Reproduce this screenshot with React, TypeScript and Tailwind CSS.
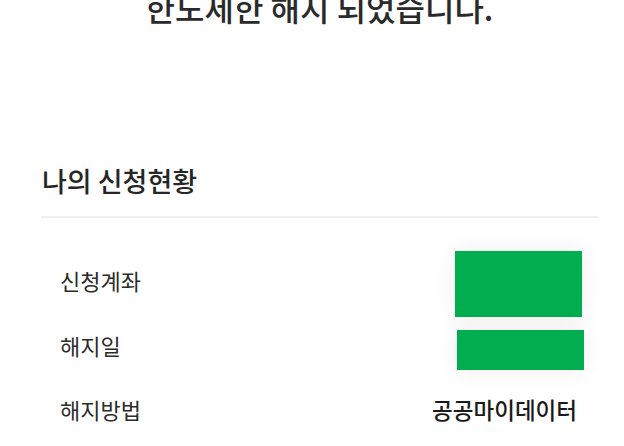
export default function App() {
  const rows = [
    { label: "신청계좌", value: null, box: "right-[16px] top-[3px] w-[127px] h-[66px]" },
    { label: "해지일", value: null, box: "right-[14px] top-[17px] w-[127px] h-[40px]" },
    { label: "해지방법", value: "공공마이데이터", box: "" },
  ];

  return (
    <div
      className="w-[624px] h-[446px] overflow-hidden bg-white pl-[41px] pr-[26px] text-[#222]"
      style={{ fontFamily: '"Noto Sans CJK KR", "Noto Sans", sans-serif' }}
    >
      {/* Title */}
      <h1 className="-mt-[15px] text-center text-[32px] leading-[44px] font-medium text-[#2a2a2a]">
        한도제한 해지 되었습니다.
      </h1>

      {/* Status section */}
      <section className="mt-[134px]">
        <h2 className="pl-px text-[27px] leading-[36px] font-medium text-[#262626]">
          나의 신청현황
        </h2>
        <div className="mt-[17px] h-[2px] bg-[#eef0f0]" />

        <div className="mt-[30px] flex flex-col">
          {rows.map((row) => (
            <div
              key={row.label}
              className="relative flex h-[64.5px] items-center justify-between pl-[19px] pr-[21px]"
            >
              <span className="text-[22px] leading-[30px] text-[#2b2b2b]">{row.label}</span>
              {row.value && (
                <span className="text-[22.5px] leading-[30px] font-medium text-[#1a1a1a]">
                  {row.value}
                </span>
              )}
              {row.box && (
                <div
                  className={`absolute bg-[#00ae4f] shadow-[0_0_24px_rgba(0,0,0,0.07)] ${row.box}`}
                />
              )}
            </div>
          ))}
        </div>
      </section>
    </div>
  );
}
